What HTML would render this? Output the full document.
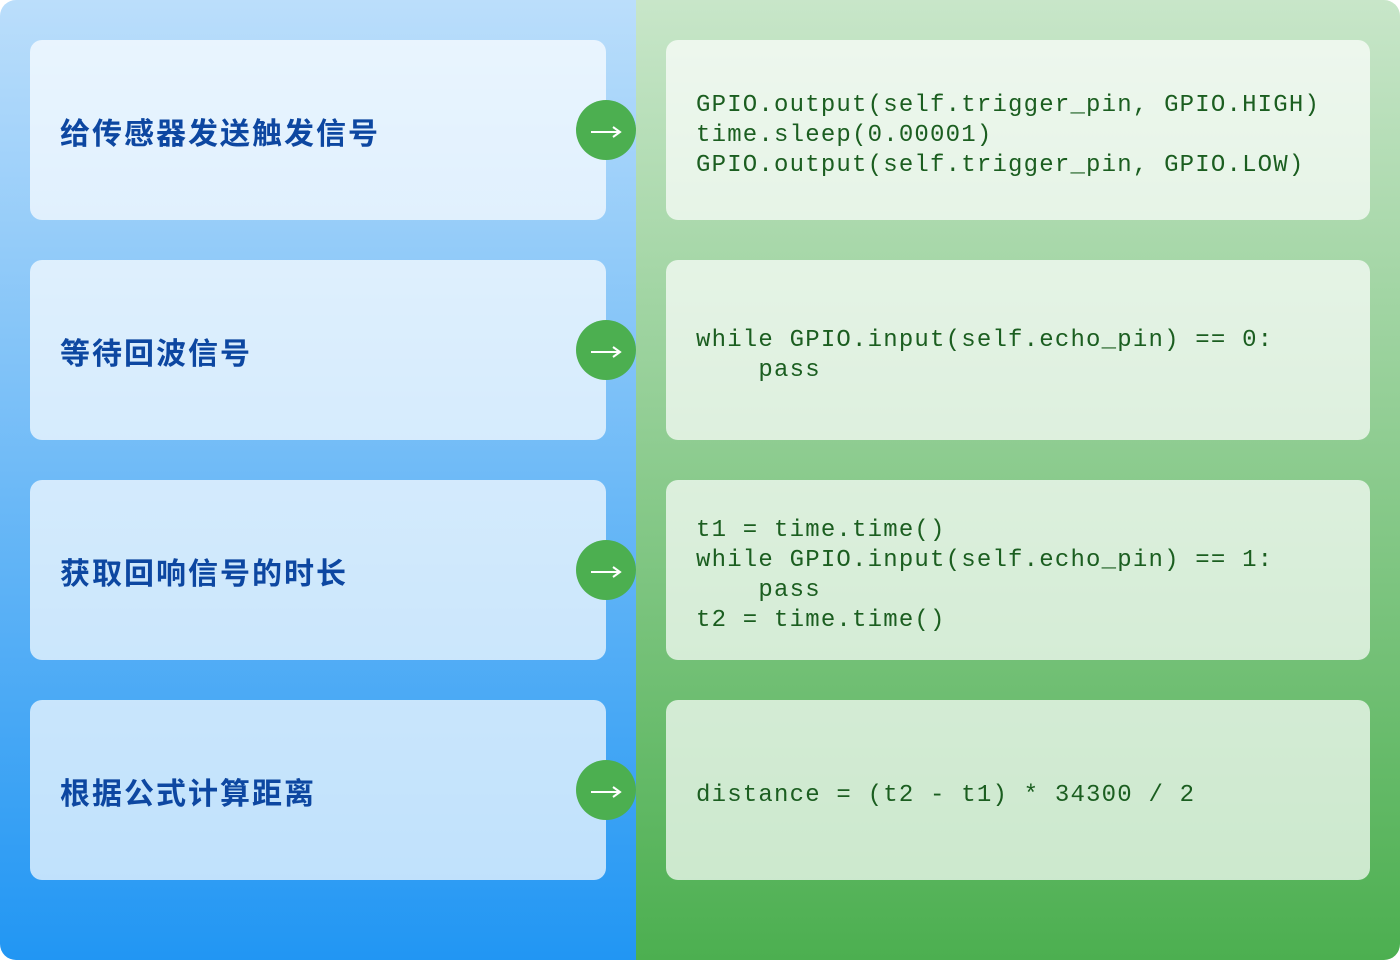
<!DOCTYPE html>
<html><head><meta charset="utf-8"><style>
html,body{margin:0;padding:0;width:1400px;height:960px;overflow:hidden;background:#fff}
.wrap{position:absolute;left:0;top:0;width:1400px;height:960px;border-radius:16px;overflow:hidden}
.l{position:absolute;left:0;top:0;width:636px;height:960px;background:linear-gradient(#bbdefb,#2196f3)}
.r{position:absolute;left:636px;top:0;width:764px;height:960px;background:linear-gradient(#c8e6c9,#4caf50)}
.card{position:absolute;height:180px;border-radius:12px;background:rgba(255,255,255,0.7);display:flex;align-items:center;box-sizing:border-box}
.lc{left:30px;width:576px;padding-left:30px;padding-top:2px;font-family:"Liberation Sans","Noto Sans CJK SC",sans-serif;font-weight:bold;font-size:30px;letter-spacing:2px;color:#0d47a1}
.rc{left:666px;width:704px;padding-left:30px;padding-top:12px;font-family:"Liberation Mono",monospace;font-size:24px;letter-spacing:1.2px;line-height:30px;color:#1b5e20;white-space:pre}
.c{position:absolute;left:576px;width:60px;height:60px;border-radius:50%;background:#4caf50;display:flex;align-items:center;justify-content:center;padding-top:4px;box-sizing:border-box}
</style></head><body><div class="wrap">
<div class="l"></div><div class="r"></div>
<div class="card lc" style="top:40px">给传感器发送触发信号</div>
<div class="card lc" style="top:260px">等待回波信号</div>
<div class="card lc" style="top:480px">获取回响信号的时长</div>
<div class="card lc" style="top:700px">根据公式计算距离</div>
<div class="c" style="top:100px"><svg width="32" height="14" viewBox="0 0 32 14"><path d="M1 7H30M23 2L30 7L23 12" stroke="#fff" stroke-width="2" fill="none"/></svg></div>
<div class="c" style="top:320px"><svg width="32" height="14" viewBox="0 0 32 14"><path d="M1 7H30M23 2L30 7L23 12" stroke="#fff" stroke-width="2" fill="none"/></svg></div>
<div class="c" style="top:540px"><svg width="32" height="14" viewBox="0 0 32 14"><path d="M1 7H30M23 2L30 7L23 12" stroke="#fff" stroke-width="2" fill="none"/></svg></div>
<div class="c" style="top:760px"><svg width="32" height="14" viewBox="0 0 32 14"><path d="M1 7H30M23 2L30 7L23 12" stroke="#fff" stroke-width="2" fill="none"/></svg></div>
<div class="card rc" style="top:40px">GPIO.output(self.trigger_pin, GPIO.HIGH)
time.sleep(0.00001)
GPIO.output(self.trigger_pin, GPIO.LOW)</div>
<div class="card rc" style="top:260px">while GPIO.input(self.echo_pin) == 0:
    pass</div>
<div class="card rc" style="top:480px">t1 = time.time()
while GPIO.input(self.echo_pin) == 1:
    pass
t2 = time.time()</div>
<div class="card rc" style="top:700px">distance = (t2 - t1) * 34300 / 2</div>
</div></body></html>
